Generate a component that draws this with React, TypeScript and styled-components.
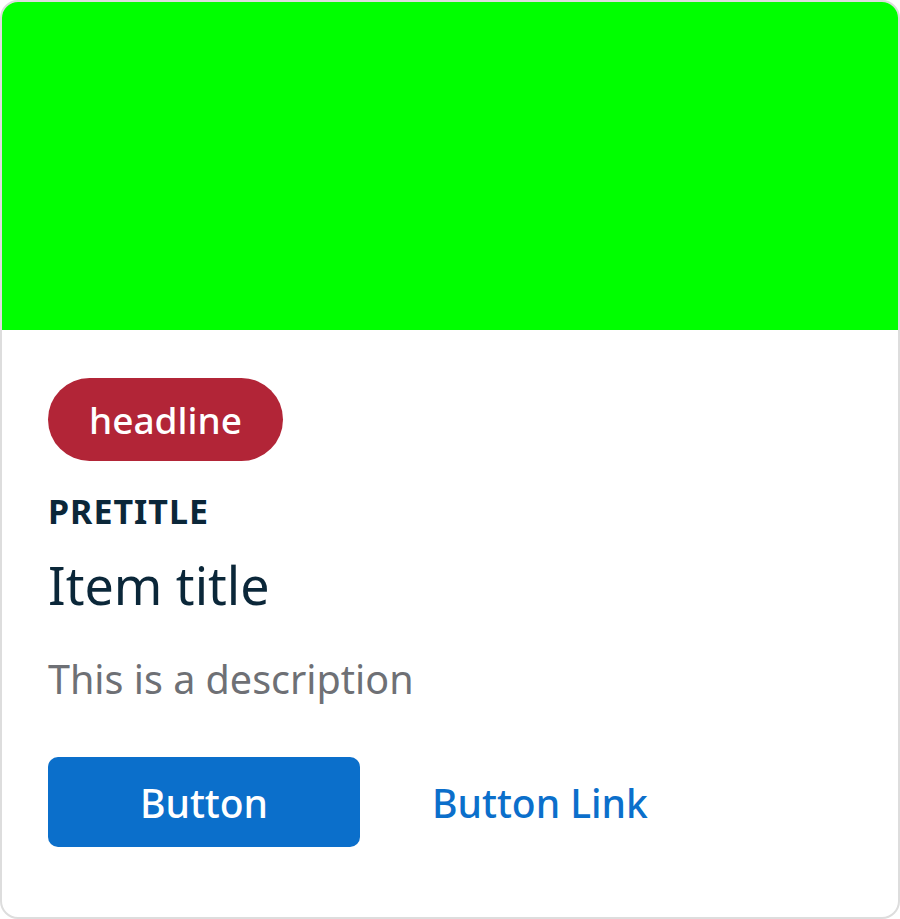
import React from "react";
import styled, { createGlobalStyle } from "styled-components";

const GlobalStyle = createGlobalStyle`
  html, body {
    margin: 0;
    padding: 0;
    background: #ffffff;
  }
  body {
    font-family: "Noto Sans", "Open Sans", Arial, sans-serif;
  }
`;

const Card = styled.div`
  box-sizing: border-box;
  width: 900px;
  height: 919px;
  border: 2px solid #dddddd;
  border-radius: 18px;
  overflow: hidden;
  display: flex;
  flex-direction: column;
  background: #ffffff;
`;

const Media = styled.div`
  height: 328px;
  background-color: #00ff00;
  flex-shrink: 0;
`;

const Body = styled.div`
  display: flex;
  flex-direction: column;
  align-items: flex-start;
  padding: 48px 46px 0 46px;
`;

const Tag = styled.span`
  display: inline-flex;
  align-items: center;
  justify-content: center;
  height: 83px;
  padding: 0 41px;
  border-radius: 42px;
  background-color: #b22537;
  color: #ffffff;
  font-size: 37px;
  font-weight: 500;
`;

const Pretitle = styled.div`
  margin-top: 30px;
  font-size: 34px;
  font-weight: 700;
  letter-spacing: 1px;
  color: #0b2739;
  line-height: 40px;
`;

const Title = styled.h2`
  margin: 22px 0 0 0;
  font-size: 52px;
  font-weight: 400;
  color: #0b2739;
  line-height: 64px;
`;

const Description = styled.p`
  margin: 36px 0 0 0;
  font-size: 39.5px;
  color: #6e7075;
  line-height: 52px;
`;

const Actions = styled.div`
  display: flex;
  align-items: center;
  gap: 72px;
  margin-top: 52px;
`;

const PrimaryButton = styled.button`
  width: 312px;
  height: 90px;
  border: none;
  border-radius: 10px;
  background-color: #0b6fcb;
  color: #ffffff;
  font-family: inherit;
  font-size: 39px;
  font-weight: 500;
  cursor: pointer;
`;

const LinkButton = styled.a`
  color: #0b6fcb;
  font-size: 39px;
  font-weight: 500;
  text-decoration: none;
  cursor: pointer;
`;

export default function App() {
  return (
    <>
      <GlobalStyle />
      <Card>
        <Media />
        <Body>
          <Tag>headline</Tag>
          <Pretitle>PRETITLE</Pretitle>
          <Title>Item title</Title>
          <Description>This is a description</Description>
          <Actions>
            <PrimaryButton>Button</PrimaryButton>
            <LinkButton>Button Link</LinkButton>
          </Actions>
        </Body>
      </Card>
    </>
  );
}
